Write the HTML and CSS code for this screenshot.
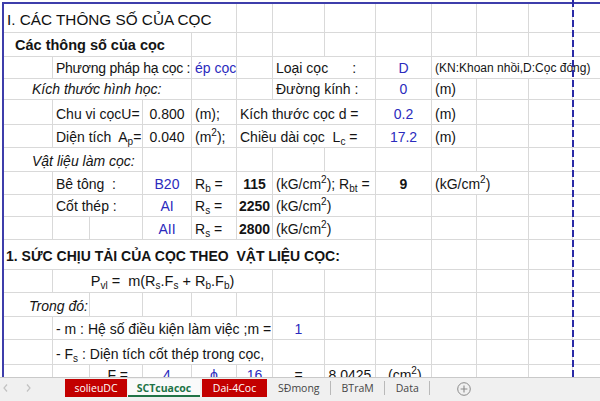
FILE: index.html
```html
<!DOCTYPE html>
<html lang="vi">
<head>
<meta charset="utf-8">
<title>SCTcuacoc</title>
<link rel="stylesheet" href="styles.css">
</head>
<body>
<div class="app">
  <div class="viewport">
    <div class="sheet">
      <!-- row 1 -->
      <div class="c s5 title"><span>I. CÁC THÔNG SỐ CỦA CỌC</span></div>
      <div class="c"></div><div class="c"></div><div class="c"></div><div class="c"></div>
      <div class="c"></div><div class="c"></div><div class="c"></div><div class="c"></div>
      <!-- row 2 -->
      <div class="c s4 h2"><span>Các thông số của cọc</span></div>
      <div class="c"></div><div class="c"></div><div class="c"></div><div class="c"></div>
      <div class="c"></div><div class="c"></div><div class="c"></div><div class="c"></div><div class="c"></div>
      <!-- row 3 -->
      <div class="c"></div>
      <div class="c s3 tight"><span>Phương pháp hạ cọc :</span></div>
      <div class="c blue"><span>ép cọc</span></div>
      <div class="c"></div>
      <div class="c s2"><span>Loại cọc<span class="gap"></span>:</span></div>
      <div class="c ctr blue"><span>D</span></div>
      <div class="c s4 note"><span>(KN:Khoan nhồi,D:Cọc đóng)</span></div>
      <!-- row 4 -->
      <div class="c s4 it ind"><span>Kích thước hình học:</span></div>
      <div class="c"></div><div class="c"></div>
      <div class="c s2"><span>Đường kính :</span></div>
      <div class="c ctr blue"><span>0</span></div>
      <div class="c"><span>(m)</span></div>
      <div class="c"></div><div class="c"></div><div class="c"></div>
      <!-- row 5 -->
      <div class="c"></div>
      <div class="c s2"><span>Chu vi cọcU=</span></div>
      <div class="c ctr"><span>0.800</span></div>
      <div class="c"><span>(m);</span></div>
      <div class="c s3"><span>Kích thước cọc d =</span></div>
      <div class="c ctr blue"><span>0.2</span></div>
      <div class="c"><span>(m)</span></div>
      <div class="c"></div><div class="c"></div><div class="c"></div>
      <!-- row 6 -->
      <div class="c"></div>
      <div class="c s2"><span>Diện tích  A<span class="sub">p</span>=</span></div>
      <div class="c ctr"><span>0.040</span></div>
      <div class="c"><span>(m<span class="sup">2</span>);</span></div>
      <div class="c s3"><span>Chiều dài cọc  L<span class="sub">c</span> =</span></div>
      <div class="c ctr blue"><span>17.2</span></div>
      <div class="c"><span>(m)</span></div>
      <div class="c"></div><div class="c"></div><div class="c"></div>
      <!-- row 7 -->
      <div class="c s3 it ind"><span>Vật liệu làm cọc:</span></div>
      <div class="c"></div><div class="c"></div><div class="c"></div><div class="c"></div><div class="c"></div>
      <div class="c"></div><div class="c"></div><div class="c"></div><div class="c"></div><div class="c"></div>
      <!-- row 8 -->
      <div class="c"></div>
      <div class="c s2"><span>Bê tông  :</span></div>
      <div class="c ctr blue"><span>B20</span></div>
      <div class="c"><span>R<span class="sub">b</span> =</span></div>
      <div class="c ctr b"><span>115</span></div>
      <div class="c s2"><span>(kG/cm<span class="sup">2</span>); R<span class="sub">bt</span> =</span></div>
      <div class="c ctr b"><span>9</span></div>
      <div class="c s2"><span>(kG/cm<span class="sup">2</span>)</span></div>
      <div class="c"></div><div class="c"></div>
      <!-- row 9 -->
      <div class="c"></div>
      <div class="c s2"><span>Cốt thép :</span></div>
      <div class="c ctr blue"><span>AI</span></div>
      <div class="c"><span>R<span class="sub">s</span> =</span></div>
      <div class="c ctr b"><span>2250</span></div>
      <div class="c s2"><span>(kG/cm<span class="sup">2</span>)</span></div>
      <div class="c"></div><div class="c"></div><div class="c"></div><div class="c"></div><div class="c"></div>
      <!-- row 10 -->
      <div class="c"></div><div class="c"></div><div class="c"></div>
      <div class="c ctr blue"><span>AII</span></div>
      <div class="c"><span>R<span class="sub">s</span> =</span></div>
      <div class="c ctr b"><span>2800</span></div>
      <div class="c s2"><span>(kG/cm<span class="sup">2</span>)</span></div>
      <div class="c"></div><div class="c"></div><div class="c"></div><div class="c"></div><div class="c"></div>
      <!-- row 11 -->
      <div class="c s8 h1"><span>1. SỨC CHỊU TẢI CỦA CỌC THEO  VẬT LIỆU CỌC:</span></div>
      <div class="c"></div><div class="c"></div><div class="c"></div><div class="c"></div><div class="c"></div>
      <!-- row 12 -->
      <div class="c"></div>
      <div class="c s5 ctr formula"><span>P<span class="sub">vl</span> =  m(R<span class="sub">s</span>.F<span class="sub">s</span> + R<span class="sub">b</span>.F<span class="sub">b</span>)</span></div>
      <div class="c"></div><div class="c"></div><div class="c"></div><div class="c"></div>
      <div class="c"></div><div class="c"></div><div class="c"></div>
      <!-- row 13 -->
      <div class="c s2 it ind2"><span>Trong đó:</span></div>
      <div class="c"></div><div class="c"></div><div class="c"></div><div class="c"></div><div class="c"></div>
      <div class="c"></div><div class="c"></div><div class="c"></div><div class="c"></div><div class="c"></div><div class="c"></div>
      <!-- row 14 -->
      <div class="c"></div>
      <div class="c s5"><span>- m : Hệ số điều kiện làm việc ;m =</span></div>
      <div class="c ctr blue"><span>1</span></div>
      <div class="c"></div><div class="c"></div><div class="c"></div><div class="c"></div><div class="c"></div><div class="c"></div>
      <!-- row 15 -->
      <div class="c"></div>
      <div class="c s5"><span>- F<span class="sub">s</span> : Diện tích cốt thép trong cọc,</span></div>
      <div class="c"></div><div class="c"></div><div class="c"></div><div class="c"></div>
      <div class="c"></div><div class="c"></div><div class="c"></div>
      <!-- row 16 -->
      <div class="c"></div><div class="c"></div>
      <div class="c end"><span>F =</span></div>
      <div class="c ctr blue"><span>4</span></div>
      <div class="c ctr blue"><span>ϕ</span></div>
      <div class="c ctr blue"><span>16</span></div>
      <div class="c ctr"><span>=</span></div>
      <div class="c ctr"><span>8.0425</span></div>
      <div class="c unit"><span>(cm<span class="sup">2</span>)</span></div>
      <div class="c"></div><div class="c"></div><div class="c"></div><div class="c"></div>
    </div>
    <div class="pagebreak"></div>
  </div>

  <div class="tabbar">
    <div class="nav">
      <svg class="chev" width="5" height="8" viewBox="0 0 5 8"><polyline points="4,0.5 1,4 4,7.5" fill="none" stroke="#c2c2c2" stroke-width="1.2"/></svg>
      <svg class="chev" width="5" height="8" viewBox="0 0 5 8"><polyline points="1,0.5 4,4 1,7.5" fill="none" stroke="#c2c2c2" stroke-width="1.2"/></svg>
    </div>
    <div class="tab red t1">solieuDC</div>
    <div class="tab active">SCTcuacoc</div>
    <div class="tab red t3">Dai-4Coc</div>
    <div class="tab plain">SĐmong</div>
    <div class="tab plain">BTraM</div>
    <div class="tab plain">Data</div>
    <svg class="add" width="14" height="14" viewBox="0 0 14 14"><circle cx="7" cy="7" r="6.3" fill="none" stroke="#8a8a8a" stroke-width="1"/><path d="M7 3.6v6.8M3.6 7h6.8" stroke="#8a8a8a" stroke-width="1.1"/></svg>
  </div>
</div>
</body>
</html>
```

FILE: styles.css
```css
* { box-sizing: border-box; }

html, body {
  margin: 0;
  padding: 0;
}

body {
  width: 600px;
  height: 401px;
  overflow: hidden;
  background: #ffffff;
  font-family: "Liberation Sans", Arial, sans-serif;
  color: #141414;
}

.app {
  display: flex;
  flex-direction: column;
  height: 401px;
}

.viewport {
  position: relative;
  flex: 1 1 auto;
  overflow: hidden;
}

.sheet {
  display: grid;
  grid-template-columns: 49px 37px 53px 49px 45px 36px 52px 51px 56px 45px 52px 44px 60px;
  grid-template-rows: 29px 24px 22px 21px 25px 23px 24px 23px 22px 23px 30px 23px 24px 23px 25px 21px;
  width: max-content;
  margin: 2px 0 0 2px;
  border-top: 2px solid #3d3dab;
  border-left: 2px solid #3d3dab;
  font-size: 14px;
}

.c {
  display: flex;
  align-items: flex-end;
  min-width: 0;
  padding: 0 3px 2px;
  border-right: 1px solid #d9d9d9;
  border-bottom: 1px solid #d9d9d9;
  white-space: pre;
  overflow: hidden;
  line-height: 16px;
}

.s2 { grid-column: span 2; }
.s3 { grid-column: span 3; }
.s4 { grid-column: span 4; }
.s5 { grid-column: span 5; }
.s8 { grid-column: span 8; }

.ctr { justify-content: center; }
.end { justify-content: flex-end; padding-right: 14px; }
.unit { padding-left: 12px; }
.tight { letter-spacing: -0.25px; }

.blue { color: #2b2bbd; }
.b { font-weight: 700; }
.it { font-style: italic; }
.ind { padding-left: 28px; }
.ind2 { padding-left: 25px; }

.title {
  font-size: 15.3px;
  padding-bottom: 4px;
  color: #111;
}

.h2 {
  font-size: 14.5px;
  font-weight: 700;
  padding-left: 11px;
  padding-bottom: 3px;
}

.h1 {
  font-weight: 700;
  padding-left: 2px;
  padding-bottom: 5px;
}

.formula { font-size: 14.5px; padding-bottom: 3px; }

.note { font-size: 12px; }

.gap {
  display: inline-block;
  width: 24px;
}

.sub {
  font-size: 10px;
  line-height: 0;
  vertical-align: -3px;
}

.sup {
  font-size: 10px;
  line-height: 0;
  vertical-align: 6px;
}

.pagebreak {
  position: absolute;
  left: 572px;
  top: 0;
  bottom: 0;
  width: 2px;
  background: repeating-linear-gradient(to bottom, #2a2aa6 0 7px, transparent 7px 10px);
}

/* sheet tabs */
.tabbar {
  flex: none;
  display: flex;
  align-items: flex-start;
  height: 24px;
  padding-top: 1px;
  border-top: 1px solid #c9c9c9;
  background: #f0f0f0;
  font-family: "Open Sans", "Noto Sans", sans-serif;
  font-size: 10.5px;
}

.nav {
  display: flex;
  align-items: center;
  gap: 18px;
  width: 65px;
  height: 18px;
  padding-left: 3px;
}

.tab {
  display: flex;
  align-items: center;
  justify-content: center;
  height: 18px;
  white-space: nowrap;
}

.tab.red {
  background: #c30000;
  color: #ffffff;
}

.t1 { width: 62px; margin-right: 1px; }
.t3 { width: 65px; }

.tab.active {
  width: 72px;
  margin-right: 2px;
  background: #fafafa;
  color: #217346;
  font-weight: 700;
  box-shadow: inset 0 -2px 0 #217346;
}

.tab.plain {
  height: 14px;
  margin-top: 2px;
  padding: 0 10px 0 11px;
  border-right: 1px solid #b9b9b9;
  color: #454545;
}

.add {
  margin-left: 27px;
  margin-top: 3px;
}
```
